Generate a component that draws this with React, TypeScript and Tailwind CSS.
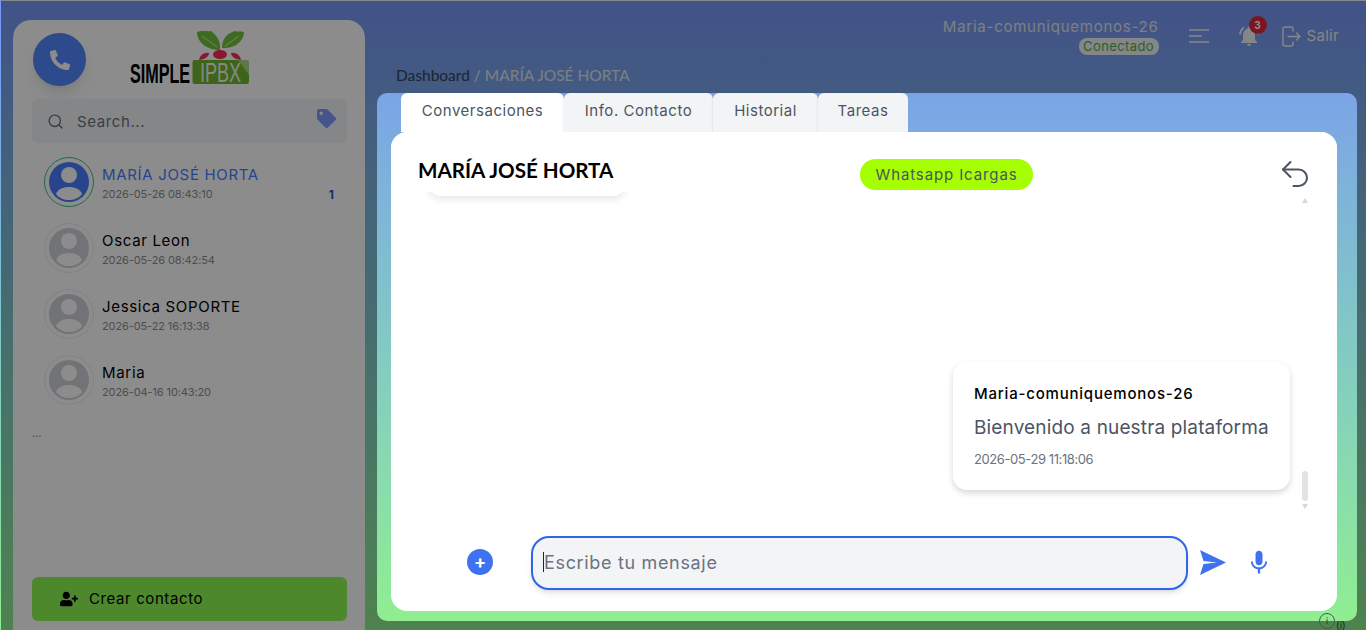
import { Search, Undo2 } from "lucide-react";
import { FaPhoneAlt, FaTag, FaUserPlus } from "react-icons/fa";
import { MdNotificationsActive } from "react-icons/md";
import { IoMdMic } from "react-icons/io";

function Avatar({ active }: { active?: boolean }) {
  const fg = active ? "#4a7dff" : "#cfd1d7";
  return (
    <div className={`w-[50px] h-[50px] rounded-full flex items-center justify-center shrink-0 border ${active ? "border-[#35c28a]" : "border-[#ececec]"}`}>
      <svg width="40" height="40" viewBox="0 0 40 40">
        <circle cx="20" cy="20" r="20" fill={fg} />
        <circle cx="20" cy="13" r="8" fill="#fff" />
        <path d="M7 32 C9 27 14 25 20 25 C26 25 31 27 33 32 C30 36 25 38 20 38 C15 38 10 36 7 32Z" fill="#fff" />
      </svg>
    </div>
  );
}

function Row({ name, date, active, count }: { name: string; date: string; active?: boolean; count?: string }) {
  return (
    <div className="h-[66px] flex items-center pl-[12px] pr-[13px]">
      <Avatar active={active} />
      <div className="ml-[8px] flex-1 mt-[2px]">
        <div className={`text-[15px] leading-[20px] tracking-[0.045em] ${active ? "text-[#4a7dff]" : "text-black"}`}>{name}</div>
        <div className="mt-[1px] text-[11px] leading-[16px] tracking-[-0.01em] text-[#8a8d96]">{date}</div>
      </div>
      {count && <div className="text-[12px] font-bold text-[#3050c8] self-end mb-[11px]">{count}</div>}
    </div>
  );
}

function Logo() {
  return (
    <svg width="122" height="58" viewBox="0 0 122 58" className="block">
      <path d="M90 22 C78 22 67 15 67 4 C73 2 78 4 81 3 C86 7 91 12 90 22Z" fill="#72c23e" />
      <path d="M92 20 C92 10 98 5 105 3 C108 4 111 3 114 4 C114 13 105 21 92 20Z" fill="#72c23e" />
      <path d="M72 8 L87 19 M109 8 L95 18" stroke="#d6efc4" strokeWidth="1" />
      <ellipse cx="90" cy="26.5" rx="7" ry="4.5" fill="#f52e55" />
      <path d="M69 32 C70 27 74 24 79 25 C79 28 76 31 69 32Z" fill="#f52e55" />
      <path d="M111 32 C110 27 106 24 101 25 C101 28 104 31 111 32Z" fill="#f52e55" />
      <rect x="62.5" y="32" width="56.5" height="24" rx="2" fill="#6fb82e" />
      <path d="M108 32 L119 32 L119 47Z" fill="#eef6e2" opacity="0.5" />
      <text transform="translate(0 54.5) scale(0.577 1)" fontFamily="'Liberation Sans', sans-serif" fontWeight="700" fontSize="28" fill="#000">SIMPLE</text>
      <text transform="translate(70 54) scale(0.667 1)" fontFamily="'Liberation Sans', sans-serif" fontSize="27" fill="#f4f8ec">IPBX</text>
    </svg>
  );
}

export default function App() {
  return (
    <div className="relative w-full h-[630px] overflow-hidden flex bg-gradient-to-b from-[#7897f8] to-[#90ee90] text-[#374151]" style={{ fontFamily: "Inter, 'Noto Sans', sans-serif" }}>
      {/* sidebar */}
      <aside className="ml-[13px] mt-[20px] w-[352px] h-[640px] shrink-0 bg-white rounded-[18px] flex flex-col pl-[19px] pr-[18px]">
        <div className="h-[79px] flex items-start">
          <div className="mt-[13px] ml-[1px] w-[53px] h-[53px] rounded-full bg-[#5288ff] flex items-center justify-center shadow-lg">
            <FaPhoneAlt className="text-white text-[20px]" />
          </div>
          <div className="ml-[44px] mt-[8px]"><Logo /></div>
        </div>
        <div className="h-[44px] rounded-[6px] bg-[#f3f4f6] flex items-center pl-[15px] pr-[11px]">
          <Search size={17} className="text-[#6b7280]" />
          <span className="ml-[13px] mt-[2px] text-[15px] tracking-[0.04em] text-[#6b7280]">Search...</span>
          <FaTag className="ml-auto mb-[5px] text-[#7c99ff] text-[19px]" />
        </div>
        <div className="mt-[6px] flex flex-col">
          <Row name="MARÍA JOSÉ HORTA" date="2026-05-26 08:43:10" active count="1" />
          <Row name="Oscar Leon" date="2026-05-26 08:42:54" />
          <Row name="Jessica SOPORTE" date="2026-05-22 16:13:38" />
          <Row name="Maria" date="2026-04-16 10:43:20" />
        </div>
        <div className="mt-[12px] text-[11px] leading-[16px] text-[#6b9b6b]">...</div>
        <div className="mt-[136px] h-[44px] rounded-[6px] bg-[#8cf950] flex items-center pl-[28px]">
          <FaUserPlus className="text-black text-[18px]" />
          <span className="ml-[11px] text-[15px] tracking-[0.04em] text-black">Crear contacto</span>
        </div>
      </aside>

      {/* right column */}
      <div className="ml-[12px] mr-[9px] flex-1 flex flex-col min-w-0">
        <header className="h-[60px] flex justify-end items-start pr-[18px]">
          <div className="mt-[18px] flex flex-col items-end">
            <span className="text-[15px] leading-[18px] tracking-[0.05em] text-[#e5e7eb]">Maria-comuniquemonos-26</span>
            <span className="mt-[2px] h-[17px] w-[80px] rounded-[8px] bg-[#f3f4f6] text-[#4caf50] text-[13px] leading-[17px] text-center tracking-[0.03em]">Conectado</span>
          </div>
          <svg width="20" height="14" viewBox="0 0 20 14" className="ml-[30px] mt-[29px]" stroke="#f3f4f6" strokeWidth="1.6">
            <path d="M0 1H20M0 7H13M0 13H20" />
          </svg>
          <div className="relative ml-[28px] mt-[24px]">
            <MdNotificationsActive className="text-[#f3f4f6] text-[24px]" />
            <span className="absolute -top-[8px] left-[12px] w-[18px] h-[18px] rounded-full bg-[#e4263a] text-white text-[10px] font-bold leading-[18px] text-center">3</span>
          </div>
          <svg width="19" height="21" viewBox="0 0 19 21" fill="none" stroke="#f3f4f6" strokeWidth="1.4" className="ml-[21px] mt-[26px]" strokeLinecap="round" strokeLinejoin="round">
            <path d="M11 5V3a2 2 0 0 0-2-2H3a2 2 0 0 0-2 2v15a2 2 0 0 0 2 2h6a2 2 0 0 0 2-2v-2M6 10.5h12M14.5 7l3.5 3.5-3.5 3.5" />
          </svg>
          <span className="ml-[6px] mt-[26px] text-[15px] leading-[20px] tracking-[0.02em] text-[#f3f4f6]">Salir</span>
        </header>
        <div className="h-[33px] pl-[19px] pt-[5px] text-[15.5px] leading-[20px]" style={{ fontFamily: "Lato, sans-serif" }}>
          <span className="text-[#374151]">Dashboard</span>
          <span className="text-[#e5e7eb]"> / MARÍA JOSÉ HORTA</span>
        </div>

        {/* panel above the dim layer */}
        <main className="relative z-20 h-[528px] rounded-[10px] bg-gradient-to-b from-[#7ba4e6] to-[#90ee90] px-[14px] pb-[10px] pr-[20px] flex flex-col">
          <nav className="h-[39px] flex items-stretch pl-[10px] text-[15px] tracking-[0.035em] text-[#4b5563]">
            <div className="w-[163px] bg-white rounded-t-[6px] flex items-center justify-center pb-[3px]">Conversaciones</div>
            <div className="w-[149px] bg-[#f3f4f6] rounded-t-[6px] flex items-center justify-center pb-[3px] shadow-[-1px_0_2px_rgba(0,0,0,0.06)]">Info. Contacto</div>
            <div className="w-[105px] bg-[#f3f4f6] rounded-t-[6px] flex items-center justify-center pb-[3px] shadow-[-1px_0_2px_rgba(0,0,0,0.06)]">Historial</div>
            <div className="w-[90px] bg-[#f3f4f6] rounded-t-[6px] flex items-center justify-center pb-[3px] shadow-[-1px_0_2px_rgba(0,0,0,0.06)]">Tareas</div>
          </nav>
          <section className="flex-1 bg-white rounded-[16px] flex flex-col overflow-hidden">
            <div className="relative z-10 h-[60px] bg-white shrink-0 flex items-start pl-[27px] pr-[28px]">
              <h1 className="mt-[24px] text-[20.6px] leading-[28px] font-bold text-black" style={{ fontFamily: "Lato, sans-serif" }}>MARÍA JOSÉ HORTA</h1>
              <div className="absolute left-[469px] top-[27px] w-[173px] h-[31px] rounded-full bg-[#a6ff00] text-[15px] leading-[31px] text-center tracking-[0.059em] text-[#4b5563]">Whatsapp Icargas</div>
              <Undo2 size={36} strokeWidth={1.4} className="ml-auto mt-[24px] -mr-[4px] text-[#4b5563]" />
            </div>
            <div className="relative flex-1 min-h-0">
              <div className="absolute left-[38px] -top-[10px] w-[196px] h-[14px] rounded-b-[12px] bg-white shadow-[0_3px_8px_rgba(0,0,0,0.10)]" />
              <div className="absolute right-[29px] top-[6px] w-0 h-0 border-x-[3px] border-x-transparent border-b-[5px] border-b-[#d8d8d8]" />
              <div className="absolute right-[29px] top-[279px] w-[6px] h-[30px] rounded-full bg-[#e3e3e3]" />
              <div className="absolute right-[29px] top-[312px] w-0 h-0 border-x-[3px] border-x-transparent border-t-[5px] border-t-[#d8d8d8]" />
              <div className="absolute left-[562px] top-[170px] w-[337px] h-[128px] bg-white rounded-[14px] shadow-[0_3px_6px_rgba(0,0,0,0.16)] pl-[21px] pt-[22px]">
                <div className="text-[15px] leading-[20px] tracking-[0.053em] font-medium text-black">Maria-comuniquemonos-26</div>
                <div className="mt-[11px] text-[19px] leading-[26px] tracking-[0.008em] text-[#4b5563]">Bienvenido a nuestra plataforma</div>
                <div className="mt-[9px] text-[13px] leading-[18px] tracking-[-0.032em] text-[#6b7280]">2026-05-29 11:18:06</div>
              </div>
            </div>
            <div className="h-[75px] shrink-0 flex items-start">
              <div className="ml-[76px] mt-[13px] w-[26px] h-[26px] rounded-full bg-[#3f72f0] flex items-center justify-center text-white text-[18px] font-bold leading-none">+</div>
              <div className="ml-[38px] w-[657px] h-[54px] rounded-[18px] border-2 border-[#2f66e8] bg-[#f3f4f6] shadow-md flex items-center pl-[10px] pb-[2px]">
                <span className="w-px h-[20px] bg-[#222]" />
                <span className="text-[18px] tracking-[0.037em] text-[#6b7280]">Escribe tu mensaje</span>
              </div>
              <svg width="26" height="25" viewBox="0 0 26 25" className="ml-[12px] mt-[14px]" fill="#3f72f0">
                <path d="M0 0 L26 12.5 L0 25 L3.5 14 L17 12.5 L3.5 11Z" />
              </svg>
              <IoMdMic className="ml-[20px] mt-[13px] text-[#3f72f0] text-[26px]" />
            </div>
          </section>
        </main>
      </div>

      {/* dim layer */}
      <div className="absolute left-[1px] top-0 right-0 bottom-0 z-10 bg-black/45 border-t border-[#888]" />

      {/* tiny hint icons at the bottom edge */}
      <div className="absolute z-30 left-[1319px] top-[613px] w-[16px] h-[16px] rounded-full border border-[#555] text-[9px] leading-[14px] text-center text-[#333]">i</div>
      <div className="absolute z-30 left-[1336px] top-[619px] text-[10px] leading-[12px] text-[#222]">(i)</div>
    </div>
  );
}
